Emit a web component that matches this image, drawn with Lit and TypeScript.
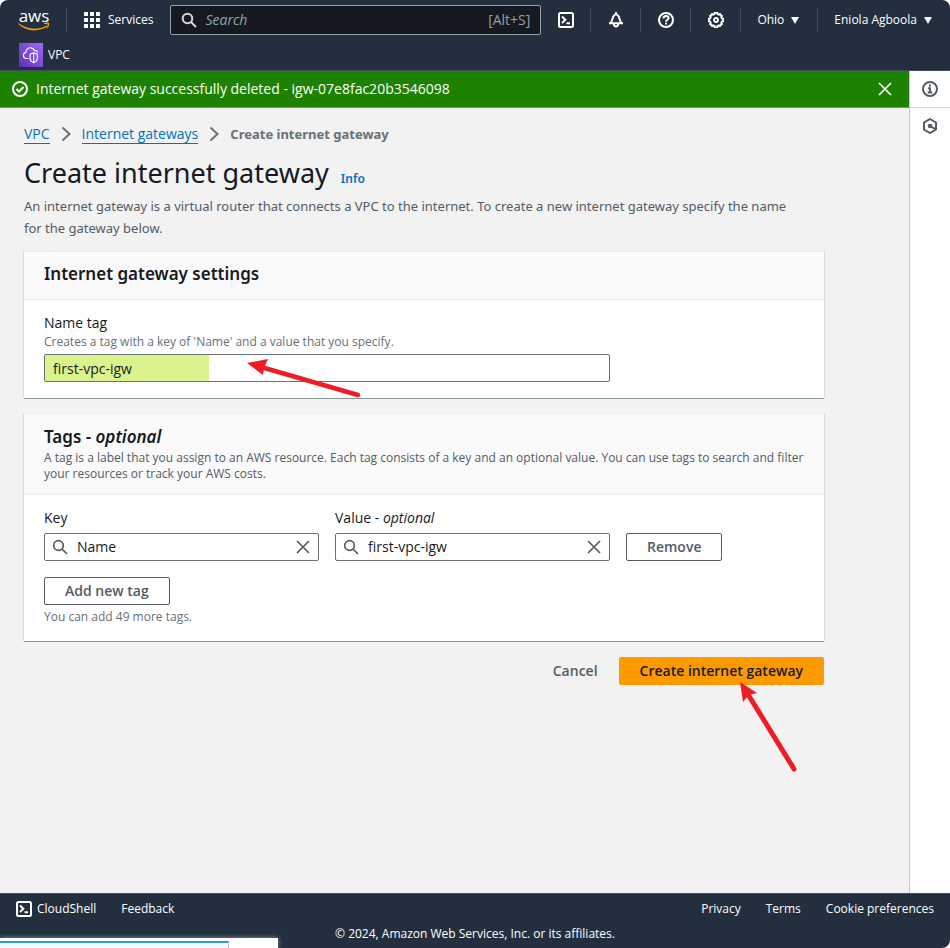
import { LitElement, html, css, svg } from "lit";
import { customElement, state } from "lit/decorators.js";

const searchIcon = html`<svg class="icon" viewBox="0 0 16 16" width="16" height="16" aria-hidden="true">
  <circle cx="6.5" cy="6.5" r="4.8" /><path d="M10 10l5 5" />
</svg>`;

const closeIcon = html`<svg class="icon" viewBox="0 0 16 16" width="16" height="16" aria-hidden="true">
  <path d="M2 2l12 12M14 2L2 14" />
</svg>`;

const shellIcon = html`<svg class="icon" viewBox="0 0 16 16" width="16" height="16" aria-hidden="true">
  <rect x="1" y="1" width="14" height="14" rx="1.5" /><path d="M4 4.5l3.3 3.2L4 11M8.5 11.3H12" />
</svg>`;

const bellIcon = html`<svg class="icon" viewBox="0 0 16 16" width="16" height="16" aria-hidden="true">
  <path d="M8 0v2M1 11.200h14M2.500 11C5.200 8.500 4 2.600 8 2.600s2.800 5.900 5.500 8.400M5.800 11.500a2.200 3 0 0 0 4.400 0" />
</svg>`;

const helpIcon = html`<svg class="icon" viewBox="0 0 16 16" width="16" height="16" aria-hidden="true">
  <circle cx="8" cy="8" r="7" /><path d="M5.500 6.500C5.500 4.800 6.500 4 8 4s2.500.900 2.500 2.200C10.500 7.800 8 7.800 8 9.800M8 10.800v1.700" />
</svg>`;

const gearPath = (() => {
  const teeth = 8;
  const points: string[] = [];
  for (let i = 0; i < teeth; i++) {
    const mid = (i / teeth) * Math.PI * 2;
    [[-0.26, 6], [-0.2, 7.2], [0.2, 7.2], [0.26, 6]].forEach(([turn, radius]) => {
      const a = mid + turn;
      points.push(`${(8 + Math.sin(a) * radius).toFixed(2)} ${(8 - Math.cos(a) * radius).toFixed(2)}`);
    });
  }
  return `M${points.join("L")}Z`;
})();

const gearIcon = html`<svg class="icon gear" viewBox="0 0 16 16" width="16" height="16" aria-hidden="true">
  <path d=${gearPath} /><circle cx="8" cy="8" r="2" />
</svg>`;

const checkIcon = html`<svg class="icon" viewBox="0 0 16 16" width="16" height="16" aria-hidden="true">
  <circle cx="8" cy="8" r="7" /><path d="M4.500 8l2.500 2.500L11.500 6" />
</svg>`;

const infoIcon = html`<svg class="icon" viewBox="0 0 16 16" width="16" height="16" aria-hidden="true">
  <circle cx="8" cy="8" r="7" /><path d="M8 3.500v2M6 7.200h2v4M5.700 11.600h4.600" />
</svg>`;

const hexIcon = html`<svg class="icon" viewBox="0 0 16 16" width="16" height="16" aria-hidden="true">
  <path d="M8 1l6 3.500v7L8 15l-6-3.500v-7zM8 8l5 2.800" /><circle cx="8" cy="8" r="1.300" />
</svg>`;

const chevronIcon = html`<svg class="icon" viewBox="0 0 16 16" width="16" height="16" aria-hidden="true">
  <path d="M4.500 1.500L11.500 8l-7 6.500" />
</svg>`;

const caretIcon = html`<svg class="caret" viewBox="0 0 8 7" width="8" height="7" aria-hidden="true">
  <path d="M0 0h8L4 7z" />
</svg>`;

const appsIcon = html`<svg class="apps" viewBox="0 0 16 16" width="16" height="16" aria-hidden="true">
  ${[0, 6, 12].map((y) => [0, 6, 12].map((x) => svg`<rect x=${x} y=${y} width="4" height="4" rx="0.500" />`))}
</svg>`;

const vpcIcon = html`<svg viewBox="0 0 24 24" width="24" height="24" aria-hidden="true">
  <defs><linearGradient id="vpc" x1="0" y1="1" x2="1" y2="0">
    <stop offset="0" stop-color="#5a30b5" /><stop offset="1" stop-color="#a166ff" />
  </linearGradient></defs>
  <rect width="24" height="24" fill="url(#vpc)" />
  <g fill="none" stroke="#fff" stroke-width="1.100">
    <path d="M9.500 15.500H7.500C5.500 15.300 4.400 14 4.400 12.400c0-1.500 1-2.700 2.500-3C6.800 6.700 8.700 4.700 11.200 4.700c1.900 0 3.300 1 4.200 2.900 1.600-.4 2.800.3 3.100 2" />
    <path d="M14.700 9.800l3.600 1.400v4.300c0 2-1.400 3.200-3.600 4.200-2.200-1-3.600-2.200-3.600-4.200v-4.300zM14.700 10v9.500" />
  </g>
</svg>`;

const baseStyles = css`
  :host {
    --ink: #16191f;
    --muted: #545b64;
    --hint: #687078;
    --link: #0073bb;
    --nav: #232f3e;
    --display: "Noto Sans", "Open Sans", sans-serif;
    font-family: "Open Sans", "Noto Sans", sans-serif;
  }
  * {
    box-sizing: border-box;
  }
  button,
  input {
    font: inherit;
    color: inherit;
    margin: 0;
  }
  button {
    cursor: pointer;
  }
  .plain {
    display: flex;
    align-items: center;
    background: none;
    border: 0;
    padding: 0;
  }
  a {
    color: var(--link);
    text-decoration: none;
  }
  svg {
    display: block;
    flex: none;
  }
  .icon {
    fill: none;
    stroke: currentColor;
    stroke-width: 2;
  }
`;

@customElement("console-nav")
export class ConsoleNav extends LitElement {
  static styles = [
    baseStyles,
    css`
      :host {
        display: block;
        background: var(--nav);
        color: #fff;
        font-size: 12px;
        font-weight: 500;
        line-height: 16px;
        border-radius: 8px 8px 0 0;
        border-bottom: 1px solid #414d5c;
      }
      .bar {
        display: flex;
        align-items: center;
        height: 40px;
        padding: 0 18px;
      }
      .logo {
        display: flex;
        flex-direction: column;
        align-items: center;
        width: 32px;
        color: #fff;
      }
      .word {
        font-size: 17px;
        font-weight: 500;
        line-height: 13px;
      }
      .line {
        width: 1px;
        height: 24px;
        background: #414d5c;
      }
      .logo + .line {
        margin: 0 17px 0 16px;
      }
      .services {
        gap: 8px;
      }
      .apps,
      .caret {
        fill: currentColor;
      }
      .gear {
        stroke-width: 1.8px;
      }
      .search {
        flex: 1;
        display: flex;
        align-items: center;
        gap: 8px;
        height: 30px;
        margin: 0 0 0 17px;
        padding: 0 10px;
        background: #161a20;
        border: 1px solid #95a0ab;
        border-radius: 2px;
        font-size: 14px;
        color: #d5dbdb;
      }
      .search input {
        flex: 1;
        min-width: 0;
        padding: 0;
        background: none;
        border: 0;
        outline: 0;
      }
      .search input::placeholder {
        color: #95a5a6;
        font-style: italic;
        opacity: 1;
      }
      .key {
        color: #95a0a6;
      }
      .tool {
        justify-content: center;
        width: 49px;
        height: 24px;
      }
      .menu {
        gap: 7px;
        padding: 0 18px 0 16px;
      }
      .menu:last-child {
        padding-right: 0;
      }
      .favourites {
        display: flex;
        height: 30px;
        padding: 3px 19px;
      }
      .favourites a {
        display: flex;
        align-items: center;
        height: 24px;
        gap: 5px;
        color: #fff;
      }
    `,
  ];

  render() {
    const tools = [
      { name: "CloudShell", icon: shellIcon },
      { name: "Notifications", icon: bellIcon },
      { name: "Help", icon: helpIcon },
      { name: "Settings", icon: gearIcon },
    ];
    return html`
      <nav class="bar">
        <a class="logo" href="#">
          <span class="word">aws</span>
          <svg viewBox="0 0 32 9" width="32" height="9" aria-hidden="true">
            <path d="M.5 1C9 7.500 20 8.500 28.500 3.400l.8 1.200C20 10.500 8 9.500.2 2z" fill="#f90" />
            <path d="M25.500 1.600c2-1.200 4.500-1.200 5.600-.6.300 1.500-.3 4-2 5.700l-.4-.3c.7-1.600 1.200-3.300.9-4-.6-.500-2.500-.500-4-.4z" fill="#f90" />
          </svg>
        </a>
        <span class="line"></span>
        <button class="plain services">${appsIcon}Services</button>
        <label class="search">
          ${searchIcon}
          <input type="text" placeholder="Search" aria-label="Search" />
          <span class="key">[Alt+S]</span>
        </label>
        ${tools.map(
          (tool) => html`<button class="plain tool" aria-label=${tool.name}>${tool.icon}</button><span class="line"></span>`
        )}
        <button class="plain menu">Ohio ${caretIcon}</button>
        <span class="line"></span>
        <button class="plain menu">Eniola Agboola ${caretIcon}</button>
      </nav>
      <div class="favourites"><a href="#">${vpcIcon}VPC</a></div>
    `;
  }
}

@customElement("console-footer")
export class ConsoleFooter extends LitElement {
  static styles = [
    baseStyles,
    css`
      :host {
        display: block;
        position: relative;
        background: var(--nav);
        border-top: 1px solid #414d5c;
        border-radius: 0 0 8px 0;
        color: #fff;
        font-size: 12px;
        font-weight: 500;
        line-height: 16px;
        padding: 7px 16px 6px;
      }
      .row {
        display: flex;
        gap: 25px;
      }
      .row a,
      .shell {
        color: #fff;
      }
      .shell {
        gap: 5px;
      }
      .space {
        flex: 1;
      }
      .copy {
        margin: 9px 0 0;
        text-align: center;
      }
      .status {
        position: absolute;
        left: 0;
        bottom: 0;
        display: flex;
        width: 278px;
        height: 10px;
        background: #fff;
        box-shadow: 0 0 5px rgba(255, 255, 255, 0.5);
      }
      .progress {
        width: 229px;
        margin-top: 3px;
        background: #f1faff;
        border-top: 2px solid #2ea0d0;
        border-right: 1px solid #b5c4cc;
      }
    `,
  ];

  render() {
    return html`
      <div class="row">
        <button class="plain shell">${shellIcon}CloudShell</button>
        <a href="#">Feedback</a>
        <span class="space"></span>
        <a href="#">Privacy</a>
        <a href="#">Terms</a>
        <a href="#">Cookie preferences</a>
      </div>
      <p class="copy">© 2024, Amazon Web Services, Inc. or its affiliates.</p>
      <div class="status"><div class="progress"></div></div>
    `;
  }
}

@customElement("app-root")
export class AppRoot extends LitElement {
  @state() private name = "first-vpc-igw";

  static styles = [
    baseStyles,
    css`
      :host {
        display: flex;
        flex-direction: column;
        min-height: 100vh;
        background: #fff;
        color: var(--ink);
        font-size: 14px;
        line-height: 22px;
      }
      .body {
        flex: 1;
        display: flex;
      }
      .page {
        flex: 1;
        min-width: 0;
        background: #f2f2f2;
      }
      .rail {
        width: 41px;
        border-left: 1px solid #c3c8c9;
        color: var(--muted);
      }
      .rail button {
        width: 100%;
        height: 36px;
        justify-content: center;
      }
      .rail button:first-child {
        height: 37px;
        border-bottom: 1px solid #d5dbdb;
      }
      .flash {
        display: flex;
        align-items: center;
        gap: 8px;
        height: 37px;
        padding: 0 16px 0 12px;
        background: #1d8102;
        color: #fff;
        font-weight: 500;
        border-bottom: 1px solid #6f9f61;
      }
      .flash span {
        flex: 1;
      }
      .thin .icon {
        stroke-width: 1.7px;
      }
      main {
        max-width: 848px;
        padding: 15px 24px;
      }
      .crumbs {
        display: flex;
        align-items: center;
        gap: 8px;
        color: var(--hint);
      }
      .crumbs a {
        line-height: 18px;
        border-bottom: 1px solid var(--link);
      }
      .crumbs strong {
        font-family: var(--display);
        font-size: 13px;
      }
      .title {
        display: flex;
        align-items: baseline;
        gap: 12px;
        margin: 10px 0 4px;
      }
      h1,
      h2,
      p {
        margin: 0;
      }
      h1 {
        font-family: var(--display);
        font-size: 27px;
        font-weight: 400;
        line-height: 36px;
      }
      .title a {
        font-family: var(--display);
        font-size: 12px;
        font-weight: 600;
      }
      .intro {
        font-family: var(--display);
        font-size: 13px;
        color: var(--muted);
        margin-bottom: 13px;
      }
      .card {
        background: #fff;
        box-shadow: 0 1px 0 #879596, -1px 0 0 #d5dbdb, 1px 0 0 #d5dbdb, 0 -1px 0 #eaeded;
        margin-bottom: 16px;
      }
      .head {
        background: #fafafa;
        border-bottom: 1px solid #eaeded;
        padding: 11px 20px 14px;
      }
      .tags .head {
        padding: 12px 20px;
      }
      h2 {
        font-family: var(--display);
        font-size: 17px;
        font-weight: 600;
        line-height: 22px;
      }
      .small {
        font-size: 12px;
        line-height: 16px;
        color: var(--hint);
      }
      .head .small {
        margin-top: 2px;
        color: var(--muted);
      }
      .content {
        padding: 12px 20px 16px;
      }
      .field {
        position: relative;
        width: 566px;
        max-width: 100%;
      }
      .field label,
      .columns label {
        display: block;
      }
      .name {
        display: block;
        width: 100%;
        height: 28px;
        margin-top: 4px;
        padding: 0 8px;
        border: 1px solid #687078;
        border-radius: 2px;
        background: linear-gradient(#daf38c, #daf38c) no-repeat 0 0 / 164px 100%;
      }
      .arrow {
        position: absolute;
        overflow: visible;
        pointer-events: none;
        fill: #ee1c25;
        stroke: #ee1c25;
      }
      .arrow.to-name {
        left: 203px;
        top: 50px;
      }
      .arrow.to-create {
        right: 28px;
        top: 25px;
      }
      .columns {
        display: grid;
        grid-template-columns: minmax(0, 275px) minmax(0, 275px) 1fr;
        column-gap: 16px;
        align-items: end;
        justify-items: start;
        margin-bottom: 16px;
      }
      .columns > div {
        width: 100%;
      }
      .combo {
        display: flex;
        align-items: center;
        gap: 9px;
        height: 28px;
        margin-top: 4px;
        padding: 0 7px;
        border: 1px solid #687078;
        border-radius: 2px;
        color: var(--muted);
      }
      .combo input {
        flex: 1;
        min-width: 0;
        padding: 0;
        border: 0;
        outline: 0;
        background: none;
        color: var(--ink);
      }
      .btn {
        height: 28px;
        padding: 0 20px;
        border: 1px solid var(--muted);
        border-radius: 2px;
        background: #fff;
        color: var(--muted);
        font-weight: 600;
        line-height: 22px;
      }
      .btn.link {
        background: none;
        border-color: transparent;
      }
      .btn.primary {
        background: #f90;
        border-color: #f90;
        color: var(--ink);
      }
      .tags .content .small {
        margin-top: 4px;
      }
      .actions {
        position: relative;
        display: flex;
        justify-content: flex-end;
      }
    `,
  ];

  private combo(id: string, value: string) {
    return html`<div class="combo thin">
      ${searchIcon}
      <input id=${id} type="text" .value=${value} />
      <button class="plain" aria-label="Clear">${closeIcon}</button>
    </div>`;
  }

  render() {
    return html`
      <console-nav></console-nav>
      <div class="body">
        <div class="page">
          <div class="flash" role="status">
            ${checkIcon}
            <span>Internet gateway successfully deleted - igw-07e8fac20b3546098</span>
            <button class="plain thin" aria-label="Dismiss">${closeIcon}</button>
          </div>
          <main>
            <nav class="crumbs">
              <a href="#">VPC</a>${chevronIcon}<a href="#">Internet gateways</a>${chevronIcon}
              <strong>Create internet gateway</strong>
            </nav>
            <div class="title">
              <h1>Create internet gateway</h1>
              <a href="#">Info</a>
            </div>
            <p class="intro">
              An internet gateway is a virtual router that connects a VPC to the internet. To create a new internet
              gateway specify the name<br />for the gateway below.
            </p>
            <section class="card">
              <div class="head"><h2>Internet gateway settings</h2></div>
              <div class="content">
                <div class="field">
                  <label for="name">Name tag</label>
                  <p class="small">Creates a tag with a key of 'Name' and a value that you specify.</p>
                  <input
                    class="name"
                    id="name"
                    type="text"
                    .value=${this.name}
                    @input=${(e: Event) => (this.name = (e.target as HTMLInputElement).value)}
                  />
                  <svg class="arrow to-name" viewBox="0 0 114 36" width="114" height="36" aria-hidden="true">
                    <path d="M14 5L111 33" stroke-width="4.500" stroke-linecap="round" />
                    <path d="M0 1L21-3 17 6 16 13z" stroke="none" />
                  </svg>
                </div>
              </div>
            </section>
            <section class="card tags">
              <div class="head">
                <h2>Tags - <em>optional</em></h2>
                <p class="small">
                  A tag is a label that you assign to an AWS resource. Each tag consists of a key and an optional value.
                  You can use tags to search and filter your resources or track your AWS costs.
                </p>
              </div>
              <div class="content">
                <div class="columns">
                  <div><label for="key">Key</label>${this.combo("key", "Name")}</div>
                  <div><label for="value">Value - <em>optional</em></label>${this.combo("value", this.name)}</div>
                  <button class="btn">Remove</button>
                </div>
                <button class="btn">Add new tag</button>
                <p class="small">You can add 49 more tags.</p>
              </div>
            </section>
            <div class="actions">
              <button class="btn link">Cancel</button>
              <button class="btn primary">Create internet gateway</button>
              <svg class="arrow to-create" viewBox="0 0 56 90" width="56" height="90" aria-hidden="true">
                <path d="M9 14L54 87" stroke-width="5" stroke-linecap="round" />
                <path d="M0 0L17 11 9 13 3 20z" stroke="none" />
              </svg>
            </div>
          </main>
        </div>
        <aside class="rail">
          <button class="plain" aria-label="Info">${infoIcon}</button>
          <button class="plain" aria-label="Diagnostics">${hexIcon}</button>
        </aside>
      </div>
      <console-footer></console-footer>
    `;
  }
}
